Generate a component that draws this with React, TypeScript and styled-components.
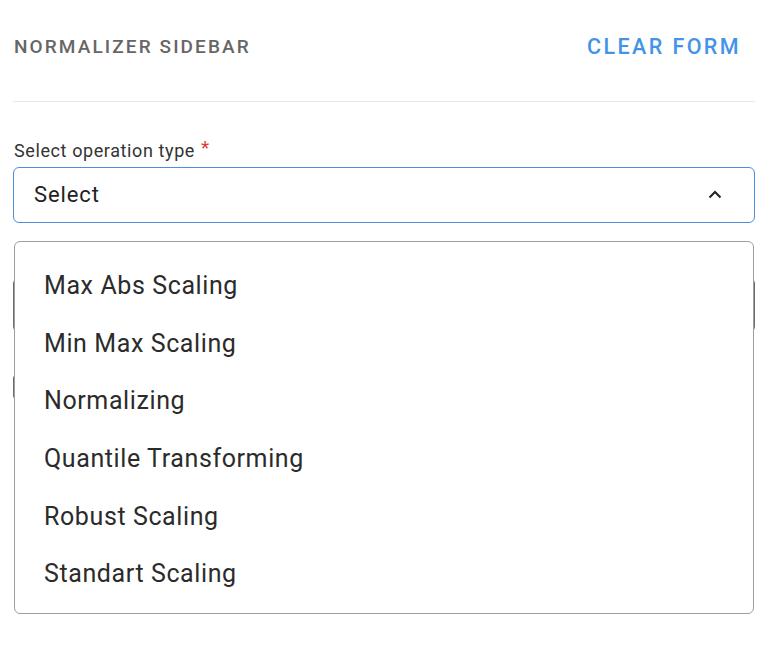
import React, { useState } from "react";
import styled, { createGlobalStyle } from "styled-components";

const GlobalStyle = createGlobalStyle`
  body {
    margin: 0;
    background: #ffffff;
    font-family: Roboto, "Liberation Sans", sans-serif;
  }
`;

const Sidebar = styled.div`
  width: 742px;
  min-height: 654px;
  margin-left: 13px;
`;

const Header = styled.div`
  display: flex;
  justify-content: space-between;
  align-items: flex-start;
  box-sizing: border-box;
  height: 102px;
  padding: 35px 14px 0 1px;
  border-bottom: 1px solid #e8e8e8;
`;

const Title = styled.h2`
  margin: 0;
  font-size: 19px;
  line-height: 24px;
  font-weight: 500;
  letter-spacing: 2.1px;
  color: #666666;
`;

const ClearButton = styled.button`
  border: none;
  background: none;
  padding: 0;
  font-family: inherit;
  font-size: 21.5px;
  line-height: 24px;
  font-weight: 500;
  letter-spacing: 2.4px;
  color: #4493e8;
  cursor: pointer;
`;

const Field = styled.div`
  margin-top: 36px;
`;

const Label = styled.label`
  display: block;
  padding-left: 1px;
  margin-bottom: 6px;
  font-size: 18px;
  line-height: 20px;
  letter-spacing: 0.6px;
  color: #333333;
`;

const Required = styled.span`
  color: #e53935;
  font-size: 19px;
  margin-left: 6px;
  vertical-align: 3px;
`;

const SelectWrap = styled.div`
  position: relative;
`;

const SelectBox = styled.div<{ $open: boolean }>`
  display: flex;
  align-items: center;
  justify-content: space-between;
  box-sizing: border-box;
  height: 56px;
  padding: 0 32px 2px 20px;
  border: 1px solid ${(p) => (p.$open ? "#4a90e2" : "#8a8a8a")};
  border-radius: 6px;
  font-size: 22px;
  letter-spacing: 0.9px;
  color: #222222;
  cursor: pointer;
`;

const Menu = styled.ul`
  position: absolute;
  top: calc(100% + 18px);
  left: 1px;
  right: 1px;
  margin: 0;
  padding: 15px 0 10px;
  list-style: none;
  background: #ffffff;
  border: 1px solid #9e9e9e;
  border-radius: 6px;
  z-index: 10;
`;

const MenuItem = styled.li`
  display: flex;
  align-items: center;
  height: 57.6px;
  padding-left: 29px;
  font-size: 25px;
  letter-spacing: 0.6px;
  color: #2b2b2b;
  cursor: pointer;
`;

const HiddenInput = styled.div`
  box-sizing: border-box;
  height: 52px;
  margin-top: 56px;
  border: 1px solid #6b6b6b;
  border-radius: 4px;
`;

const HiddenToggle = styled.div`
  width: 24px;
  height: 24px;
  margin-top: 44px;
  box-sizing: border-box;
  border: 1px solid #6b6b6b;
  border-radius: 3px;
`;

const Chevron = () => (
  <svg width="14" height="9" viewBox="0 0 14 9" fill="none">
    <path d="M1.5 7.5 L7 2 L12.5 7.5" stroke="#222" strokeWidth="2" />
  </svg>
);

const options = [
  "Max Abs Scaling",
  "Min Max Scaling",
  "Normalizing",
  "Quantile Transforming",
  "Robust Scaling",
  "Standart Scaling",
];

const App = () => {
  const [open, setOpen] = useState(true);

  return (
    <>
      <GlobalStyle />
      <Sidebar>
        <Header>
          <Title>NORMALIZER SIDEBAR</Title>
          <ClearButton>CLEAR FORM</ClearButton>
        </Header>
        <Field>
          <Label>
            Select operation type<Required>*</Required>
          </Label>
          <SelectWrap>
            <SelectBox $open={open} onClick={() => setOpen(!open)}>
              <span>Select</span>
              <Chevron />
            </SelectBox>
            {open && (
              <Menu>
                {options.map((option) => (
                  <MenuItem key={option}>{option}</MenuItem>
                ))}
              </Menu>
            )}
          </SelectWrap>
          <HiddenInput />
          <HiddenToggle />
        </Field>
      </Sidebar>
    </>
  );
};

export default App;
